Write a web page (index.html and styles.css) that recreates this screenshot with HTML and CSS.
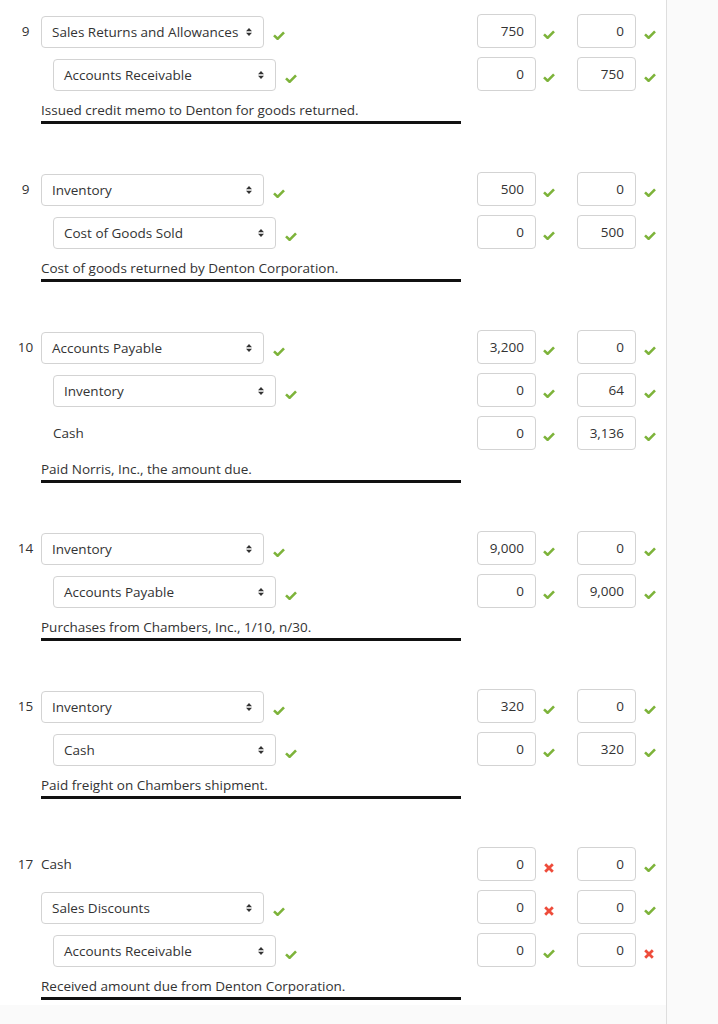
FILE: index.html
```html
<!DOCTYPE html>
<html>
<head>
<meta charset="utf-8">
<link rel="stylesheet" href="styles.css">
</head>
<body>
<div class="page">
  <div class="sheet">

    <div class="entry">
      <div class="line">
        <div class="date">9</div>
        <div class="acct"><div class="sel"><span>Sales Returns and Allowances</span><svg class="arr" viewBox="0 0 6 8"><path d="M0 3.2L3 0L6 3.2ZM0 4.8L3 8L6 4.8Z"/></svg></div><svg class="ok" viewBox="0 0 12 9"><polyline points="1,4.4 4.6,7.8 11,1.3"/></svg></div>
        <div class="amt dr"><div class="box">750</div><svg class="ok" viewBox="0 0 12 9"><polyline points="1,4.4 4.6,7.8 11,1.3"/></svg></div>
        <div class="amt cr"><div class="box">0</div><svg class="ok" viewBox="0 0 12 9"><polyline points="1,4.4 4.6,7.8 11,1.3"/></svg></div>
      </div>
      <div class="line">
        <div class="date"></div>
        <div class="acct credit"><div class="sel"><span>Accounts Receivable</span><svg class="arr" viewBox="0 0 6 8"><path d="M0 3.2L3 0L6 3.2ZM0 4.8L3 8L6 4.8Z"/></svg></div><svg class="ok" viewBox="0 0 12 9"><polyline points="1,4.4 4.6,7.8 11,1.3"/></svg></div>
        <div class="amt dr"><div class="box">0</div><svg class="ok" viewBox="0 0 12 9"><polyline points="1,4.4 4.6,7.8 11,1.3"/></svg></div>
        <div class="amt cr"><div class="box">750</div><svg class="ok" viewBox="0 0 12 9"><polyline points="1,4.4 4.6,7.8 11,1.3"/></svg></div>
      </div>
      <div class="desc">Issued credit memo to Denton for goods returned.</div>
    </div>

    <div class="entry">
      <div class="line">
        <div class="date">9</div>
        <div class="acct"><div class="sel"><span>Inventory</span><svg class="arr" viewBox="0 0 6 8"><path d="M0 3.2L3 0L6 3.2ZM0 4.8L3 8L6 4.8Z"/></svg></div><svg class="ok" viewBox="0 0 12 9"><polyline points="1,4.4 4.6,7.8 11,1.3"/></svg></div>
        <div class="amt dr"><div class="box">500</div><svg class="ok" viewBox="0 0 12 9"><polyline points="1,4.4 4.6,7.8 11,1.3"/></svg></div>
        <div class="amt cr"><div class="box">0</div><svg class="ok" viewBox="0 0 12 9"><polyline points="1,4.4 4.6,7.8 11,1.3"/></svg></div>
      </div>
      <div class="line">
        <div class="date"></div>
        <div class="acct credit"><div class="sel"><span>Cost of Goods Sold</span><svg class="arr" viewBox="0 0 6 8"><path d="M0 3.2L3 0L6 3.2ZM0 4.8L3 8L6 4.8Z"/></svg></div><svg class="ok" viewBox="0 0 12 9"><polyline points="1,4.4 4.6,7.8 11,1.3"/></svg></div>
        <div class="amt dr"><div class="box">0</div><svg class="ok" viewBox="0 0 12 9"><polyline points="1,4.4 4.6,7.8 11,1.3"/></svg></div>
        <div class="amt cr"><div class="box">500</div><svg class="ok" viewBox="0 0 12 9"><polyline points="1,4.4 4.6,7.8 11,1.3"/></svg></div>
      </div>
      <div class="desc">Cost of goods returned by Denton Corporation.</div>
    </div>

    <div class="entry">
      <div class="line">
        <div class="date">10</div>
        <div class="acct"><div class="sel"><span>Accounts Payable</span><svg class="arr" viewBox="0 0 6 8"><path d="M0 3.2L3 0L6 3.2ZM0 4.8L3 8L6 4.8Z"/></svg></div><svg class="ok" viewBox="0 0 12 9"><polyline points="1,4.4 4.6,7.8 11,1.3"/></svg></div>
        <div class="amt dr"><div class="box">3,200</div><svg class="ok" viewBox="0 0 12 9"><polyline points="1,4.4 4.6,7.8 11,1.3"/></svg></div>
        <div class="amt cr"><div class="box">0</div><svg class="ok" viewBox="0 0 12 9"><polyline points="1,4.4 4.6,7.8 11,1.3"/></svg></div>
      </div>
      <div class="line">
        <div class="date"></div>
        <div class="acct credit"><div class="sel"><span>Inventory</span><svg class="arr" viewBox="0 0 6 8"><path d="M0 3.2L3 0L6 3.2ZM0 4.8L3 8L6 4.8Z"/></svg></div><svg class="ok" viewBox="0 0 12 9"><polyline points="1,4.4 4.6,7.8 11,1.3"/></svg></div>
        <div class="amt dr"><div class="box">0</div><svg class="ok" viewBox="0 0 12 9"><polyline points="1,4.4 4.6,7.8 11,1.3"/></svg></div>
        <div class="amt cr"><div class="box">64</div><svg class="ok" viewBox="0 0 12 9"><polyline points="1,4.4 4.6,7.8 11,1.3"/></svg></div>
      </div>
      <div class="line">
        <div class="date"></div>
        <div class="acct credit"><div class="plain">Cash</div></div>
        <div class="amt dr"><div class="box">0</div><svg class="ok" viewBox="0 0 12 9"><polyline points="1,4.4 4.6,7.8 11,1.3"/></svg></div>
        <div class="amt cr"><div class="box">3,136</div><svg class="ok" viewBox="0 0 12 9"><polyline points="1,4.4 4.6,7.8 11,1.3"/></svg></div>
      </div>
      <div class="desc">Paid Norris, Inc., the amount due.</div>
    </div>

    <div class="entry">
      <div class="line">
        <div class="date">14</div>
        <div class="acct"><div class="sel"><span>Inventory</span><svg class="arr" viewBox="0 0 6 8"><path d="M0 3.2L3 0L6 3.2ZM0 4.8L3 8L6 4.8Z"/></svg></div><svg class="ok" viewBox="0 0 12 9"><polyline points="1,4.4 4.6,7.8 11,1.3"/></svg></div>
        <div class="amt dr"><div class="box">9,000</div><svg class="ok" viewBox="0 0 12 9"><polyline points="1,4.4 4.6,7.8 11,1.3"/></svg></div>
        <div class="amt cr"><div class="box">0</div><svg class="ok" viewBox="0 0 12 9"><polyline points="1,4.4 4.6,7.8 11,1.3"/></svg></div>
      </div>
      <div class="line">
        <div class="date"></div>
        <div class="acct credit"><div class="sel"><span>Accounts Payable</span><svg class="arr" viewBox="0 0 6 8"><path d="M0 3.2L3 0L6 3.2ZM0 4.8L3 8L6 4.8Z"/></svg></div><svg class="ok" viewBox="0 0 12 9"><polyline points="1,4.4 4.6,7.8 11,1.3"/></svg></div>
        <div class="amt dr"><div class="box">0</div><svg class="ok" viewBox="0 0 12 9"><polyline points="1,4.4 4.6,7.8 11,1.3"/></svg></div>
        <div class="amt cr"><div class="box">9,000</div><svg class="ok" viewBox="0 0 12 9"><polyline points="1,4.4 4.6,7.8 11,1.3"/></svg></div>
      </div>
      <div class="desc">Purchases from Chambers, Inc., 1/10, n/30.</div>
    </div>

    <div class="entry">
      <div class="line">
        <div class="date">15</div>
        <div class="acct"><div class="sel"><span>Inventory</span><svg class="arr" viewBox="0 0 6 8"><path d="M0 3.2L3 0L6 3.2ZM0 4.8L3 8L6 4.8Z"/></svg></div><svg class="ok" viewBox="0 0 12 9"><polyline points="1,4.4 4.6,7.8 11,1.3"/></svg></div>
        <div class="amt dr"><div class="box">320</div><svg class="ok" viewBox="0 0 12 9"><polyline points="1,4.4 4.6,7.8 11,1.3"/></svg></div>
        <div class="amt cr"><div class="box">0</div><svg class="ok" viewBox="0 0 12 9"><polyline points="1,4.4 4.6,7.8 11,1.3"/></svg></div>
      </div>
      <div class="line">
        <div class="date"></div>
        <div class="acct credit"><div class="sel"><span>Cash</span><svg class="arr" viewBox="0 0 6 8"><path d="M0 3.2L3 0L6 3.2ZM0 4.8L3 8L6 4.8Z"/></svg></div><svg class="ok" viewBox="0 0 12 9"><polyline points="1,4.4 4.6,7.8 11,1.3"/></svg></div>
        <div class="amt dr"><div class="box">0</div><svg class="ok" viewBox="0 0 12 9"><polyline points="1,4.4 4.6,7.8 11,1.3"/></svg></div>
        <div class="amt cr"><div class="box">320</div><svg class="ok" viewBox="0 0 12 9"><polyline points="1,4.4 4.6,7.8 11,1.3"/></svg></div>
      </div>
      <div class="desc">Paid freight on Chambers shipment.</div>
    </div>

    <div class="entry">
      <div class="line">
        <div class="date">17</div>
        <div class="acct"><div class="plain">Cash</div></div>
        <div class="amt dr"><div class="box">0</div><svg class="bad" viewBox="0 0 10 10"><path d="M1.2 1.2L8.8 8.8M8.8 1.2L1.2 8.8"/></svg></div>
        <div class="amt cr"><div class="box">0</div><svg class="ok" viewBox="0 0 12 9"><polyline points="1,4.4 4.6,7.8 11,1.3"/></svg></div>
      </div>
      <div class="line">
        <div class="date"></div>
        <div class="acct"><div class="sel"><span>Sales Discounts</span><svg class="arr" viewBox="0 0 6 8"><path d="M0 3.2L3 0L6 3.2ZM0 4.8L3 8L6 4.8Z"/></svg></div><svg class="ok" viewBox="0 0 12 9"><polyline points="1,4.4 4.6,7.8 11,1.3"/></svg></div>
        <div class="amt dr"><div class="box">0</div><svg class="bad" viewBox="0 0 10 10"><path d="M1.2 1.2L8.8 8.8M8.8 1.2L1.2 8.8"/></svg></div>
        <div class="amt cr"><div class="box">0</div><svg class="ok" viewBox="0 0 12 9"><polyline points="1,4.4 4.6,7.8 11,1.3"/></svg></div>
      </div>
      <div class="line">
        <div class="date"></div>
        <div class="acct credit"><div class="sel"><span>Accounts Receivable</span><svg class="arr" viewBox="0 0 6 8"><path d="M0 3.2L3 0L6 3.2ZM0 4.8L3 8L6 4.8Z"/></svg></div><svg class="ok" viewBox="0 0 12 9"><polyline points="1,4.4 4.6,7.8 11,1.3"/></svg></div>
        <div class="amt dr"><div class="box">0</div><svg class="ok" viewBox="0 0 12 9"><polyline points="1,4.4 4.6,7.8 11,1.3"/></svg></div>
        <div class="amt cr"><div class="box">0</div><svg class="bad" viewBox="0 0 10 10"><path d="M1.2 1.2L8.8 8.8M8.8 1.2L1.2 8.8"/></svg></div>
      </div>
      <div class="desc">Received amount due from Denton Corporation.</div>
    </div>

  </div>
</div>
</body>
</html>
```

FILE: styles.css
```css
html, body {
  margin: 0;
  padding: 0;
}
body {
  background: #fafafa;
  font-family: "Open Sans", "Liberation Sans", sans-serif;
  font-size: 13.5px;
  color: #333;
}
.page {
  width: 666px;
  min-height: 100vh;
  border-right: 1px solid #dedede;
}
.sheet {
  background: #fff;
  padding: 14px 0 5px 0;
}
.entry {
  display: flex;
  flex-direction: column;
  gap: 9px;
  margin-bottom: 48px;
}
.entry:last-child {
  margin-bottom: 0;
}
.line {
  display: flex;
  align-items: flex-start;
  height: 34px;
}
.line > * {
  flex-shrink: 0;
}
.date {
  width: 31px;
  padding-left: 10px;
  text-align: center;
  line-height: 35px;
}
.acct {
  width: 436px;
  display: flex;
  align-items: flex-start;
}
.acct.credit {
  padding-left: 12px;
  width: 424px;
}
.sel {
  box-sizing: border-box;
  width: 223px;
  height: 32px;
  margin-top: 2px;
  border: 1px solid #d3d3d3;
  border-radius: 4px;
  display: flex;
  align-items: center;
  justify-content: space-between;
  padding: 0 11px 0 10px;
  line-height: 18px;
}
.arr {
  width: 6px;
  height: 8px;
  fill: #333;
  flex-shrink: 0;
}
.plain {
  line-height: 34px;
}
.ok {
  width: 12px;
  height: 9px;
  margin-top: 16px;
  fill: none;
  stroke: #7db33a;
  stroke-width: 2.6;
  flex-shrink: 0;
}
.bad {
  width: 10px;
  height: 10px;
  margin-top: 16px;
  fill: none;
  stroke: #ee4c3b;
  stroke-width: 2.8;
  flex-shrink: 0;
}
.acct .ok {
  margin-left: 9px;
  margin-top: 17px;
}
.amt {
  display: flex;
  align-items: flex-start;
}
.amt.dr {
  width: 100px;
}
.box {
  box-sizing: border-box;
  width: 59px;
  height: 34px;
  border: 1px solid #d3d3d3;
  border-radius: 4px;
  text-align: right;
  padding-right: 11px;
  line-height: 32px;
  flex-shrink: 0;
}
.amt.dr .ok {
  margin-left: 7px;
}
.amt.cr .ok {
  margin-left: 8px;
}
.amt .bad {
  margin-left: 8px;
}
.desc {
  margin-left: 41px;
  margin-top: 1px;
  width: 420px;
  line-height: 18px;
  padding-bottom: 2px;
  border-bottom: 3px solid #111;
}
```
